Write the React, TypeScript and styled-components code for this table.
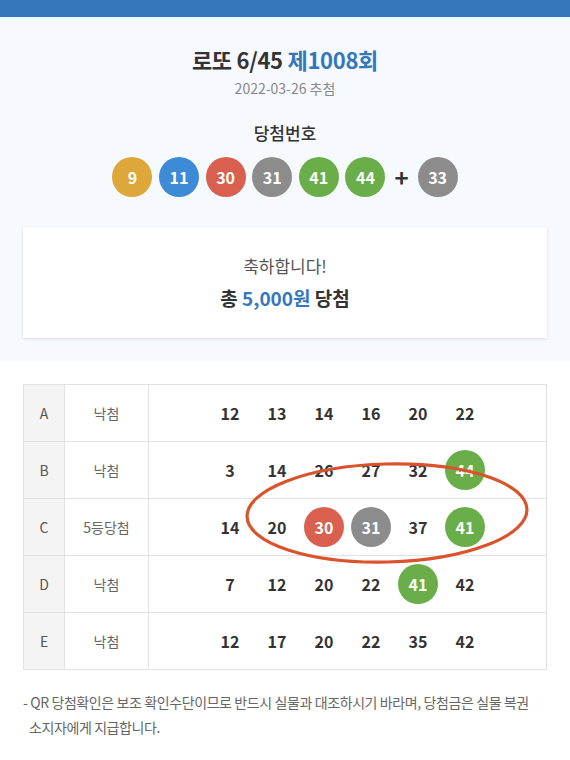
import React from 'react'
import styled, { createGlobalStyle } from 'styled-components'

const GlobalStyle = createGlobalStyle`
  html, body {
    margin: 0;
    padding: 0;
    background: #ffffff;
    font-family: "Noto Sans CJK KR", "Noto Sans", sans-serif;
    color: #333;
  }
`

type BallColor = 'yellow' | 'blue' | 'red' | 'gray' | 'green'

const ballColors: Record<BallColor, string> = {
  yellow: '#dea73a',
  blue: '#3d8bd6',
  red: '#d9604f',
  gray: '#8c8c8c',
  green: '#69ae48',
}

const colorOf = (n: number): BallColor => {
  if (n <= 10) return 'yellow'
  if (n <= 20) return 'blue'
  if (n <= 30) return 'red'
  if (n <= 40) return 'gray'
  return 'green'
}

const winning = [9, 11, 30, 31, 41, 44]
const bonus = 33

const games = [
  { label: 'A', result: '낙첨', nums: [12, 13, 14, 16, 20, 22] },
  { label: 'B', result: '낙첨', nums: [3, 14, 26, 27, 32, 44] },
  { label: 'C', result: '5등당첨', nums: [14, 20, 30, 31, 37, 41] },
  { label: 'D', result: '낙첨', nums: [7, 12, 20, 22, 41, 42] },
  { label: 'E', result: '낙첨', nums: [12, 17, 20, 22, 35, 42] },
]

const App: React.FC = () => {
  return (
    <>
      <GlobalStyle />
      <Page>
        <TopBar />
        <Summary>
          <Title>
            로또 6/45 <Highlight>제1008회</Highlight>
          </Title>
          <DrawDate>2022-03-26 추첨</DrawDate>
          <SubTitle>당첨번호</SubTitle>
          <BallRow>
            {winning.map((n) => (
              <Ball key={n} color={colorOf(n)}>{n}</Ball>
            ))}
            <Plus>+</Plus>
            <Ball color={colorOf(bonus)}>{bonus}</Ball>
          </BallRow>
          <ResultCard>
            <Congrats>축하합니다!</Congrats>
            <Prize>
              총 <Highlight>5,000원</Highlight> 당첨
            </Prize>
          </ResultCard>
        </Summary>

        <TableWrap>
          <Table>
            {games.map((g) => (
              <Row key={g.label}>
                <LabelCell>{g.label}</LabelCell>
                <ResultCell>{g.result}</ResultCell>
                <NumCell>
                  {g.nums.map((n) =>
                    winning.includes(n) ? (
                      <Ball key={n} color={colorOf(n)}>{n}</Ball>
                    ) : (
                      <TableNum key={n}>{n}</TableNum>
                    )
                  )}
                </NumCell>
              </Row>
            ))}
          </Table>
          {/* hand-drawn marker around the winning game */}
          <Circle viewBox="0 0 290 104" aria-hidden>
            <ellipse cx="145" cy="52" rx="140" ry="49" fill="none" stroke="#d9532c" strokeWidth="3.2" />
          </Circle>
        </TableWrap>

        <Notice>
          - QR 당첨확인은 보조 확인수단이므로 반드시 실물과 대조하시기 바라며, 당첨금은 실물 복권
          <br />
          소지자에게 지급합니다.
        </Notice>
      </Page>
    </>
  )
}

export default App

const Page = styled.div`
  width: 570px;
  min-height: 760px;
  background: #ffffff;
`

const TopBar = styled.div`
  height: 17px;
  background: #3577bc;
`

const Summary = styled.section`
  background: #f6f9fd;
  padding: 25px 23px 23px;
  display: flex;
  flex-direction: column;
  align-items: center;
`

const Title = styled.h1`
  margin: 0;
  font-size: 22px;
  font-weight: 700;
  line-height: 34px;
  color: #333;
  letter-spacing: -0.3px;
`

const Highlight = styled.span`
  color: #3577bc;
`

const DrawDate = styled.div`
  margin-top: 1px;
  font-size: 14px;
  line-height: 22px;
  color: #888;
`

const SubTitle = styled.div`
  margin-top: 22px;
  font-size: 17px;
  line-height: 24px;
  font-weight: 500;
  color: #333;
`

const BallRow = styled.div`
  margin-top: 12px;
  display: flex;
  align-items: center;
  gap: 6.6px;
`

const Ball = styled.span<{ color: BallColor }>`
  width: 40px;
  height: 40px;
  border-radius: 50%;
  background: ${(p) => ballColors[p.color]};
  color: #fff;
  font-size: 16px;
  font-weight: 700;
  display: flex;
  align-items: center;
  justify-content: center;
`

const Plus = styled.span`
  width: 19px;
  text-align: center;
  font-size: 24px;
  font-weight: 700;
  color: #333;
  line-height: 40px;
`

const ResultCard = styled.div`
  margin-top: 30px;
  align-self: stretch;
  height: 111px;
  background: #ffffff;
  box-shadow: 0 1px 3px rgba(0, 0, 0, 0.12);
  display: flex;
  flex-direction: column;
  align-items: center;
  justify-content: center;
`

const Congrats = styled.div`
  font-size: 17px;
  line-height: 26px;
  color: #555;
`

const Prize = styled.div`
  margin-top: 5px;
  font-size: 19px;
  line-height: 28px;
  font-weight: 700;
  color: #333;
`

const TableWrap = styled.div`
  position: relative;
  margin: 23px 23px 0;
`

const Table = styled.div`
  border-top: 1px solid #e2e2e2;
  border-left: 1px solid #e2e2e2;
  border-right: 1px solid #e2e2e2;
`

const Row = styled.div`
  display: grid;
  grid-template-columns: 41px 84px 1fr;
  height: 56px;
  border-bottom: 1px solid #e2e2e2;
`

const LabelCell = styled.div`
  background: #f4f4f4;
  border-right: 1px solid #e2e2e2;
  display: flex;
  align-items: center;
  justify-content: center;
  font-size: 14px;
  color: #555;
`

const ResultCell = styled.div`
  border-right: 1px solid #e2e2e2;
  display: flex;
  align-items: center;
  justify-content: center;
  font-size: 14px;
  color: #666;
`

const NumCell = styled.div`
  display: flex;
  align-items: center;
  justify-content: center;
  gap: 7px;
`

const TableNum = styled.span`
  width: 40px;
  text-align: center;
  font-size: 16px;
  font-weight: 700;
  color: #333;
`

const Circle = styled.svg`
  position: absolute;
  left: 219px;
  top: 77px;
  width: 290px;
  height: 104px;
  overflow: visible;
  transform: rotate(-1.5deg);
  pointer-events: none;
`

const Notice = styled.p`
  margin: 20px 23px 0 23px;
  padding-left: 6px;
  text-indent: -6px;
  font-size: 14px;
  line-height: 25px;
  color: #666;
  letter-spacing: -0.4px;
  word-break: keep-all;
`
